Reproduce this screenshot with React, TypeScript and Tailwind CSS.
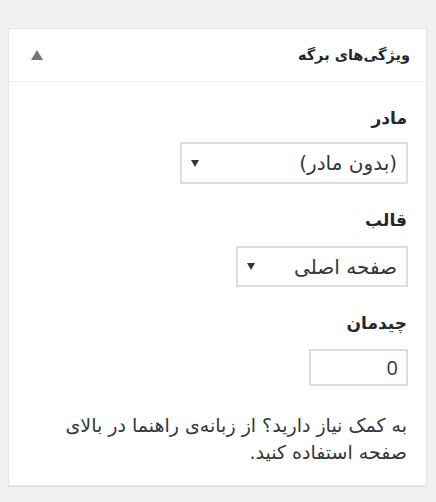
import React from "react";

const font = { fontFamily: '"DejaVu Sans", "Noto Sans", sans-serif' };

function Arrow() {
  return (
    <svg width="8" height="7" viewBox="0 0 8 7" className="shrink-0">
      <path d="M0 0 H8 L4 7 Z" fill="#32373c" />
    </svg>
  );
}

export default function App() {
  return (
    <div className="min-h-[502px] w-[436px] bg-[#f1f1f1] pt-[28px] pl-[8px]" style={font}>
      <div dir="rtl" className="w-[419px] border border-[#e5e5e5] bg-white shadow-[0_1px_1px_rgba(0,0,0,0.04)]">
        <div className="flex h-[53px] items-center justify-between border-b border-[#eeeeee] pr-[16px] pl-[22px]">
          <h2 className="text-[14.5px] font-bold leading-none text-[#23282d]">ویژگی‌های برگه</h2>
          <svg width="12" height="10" viewBox="0 0 12 10">
            <path d="M0 10 L6 0 L12 10 Z" fill="#72777c" />
          </svg>
        </div>
        <div className="pr-[18px] pl-[18px] pt-[24px] pb-[19px] text-[#32373c]">
          <div className="pr-[1px] text-[17px] font-bold leading-[24px] text-[#23282d]">مادر</div>
          <div className="mt-[12px] flex h-[42px] w-[228px] items-center justify-between border-2 border-[#dddddd] pr-[9px] pl-[9px]">
            <span className="text-[20px] leading-none">(بدون مادر)</span>
            <Arrow />
          </div>
          <div className="mt-[24px] pr-[1px] text-[17px] font-bold leading-[24px] text-[#23282d]">قالب</div>
          <div className="mt-[14px] flex h-[41px] w-[172px] items-center justify-between border-2 border-[#dddddd] pr-[9px] pl-[9px]">
            <span className="text-[20px] leading-none">صفحه اصلی</span>
            <Arrow />
          </div>
          <div className="mt-[24px] pr-[1px] text-[17px] font-bold leading-[24px] text-[#23282d]">چیدمان</div>
          <div className="mt-[14px] flex h-[37px] w-[99px] items-center border-2 border-[#dddddd] pr-[8px]">
            <span className="text-[20px] leading-none" style={{ fontFamily: '"Open Sans", sans-serif' }}>0</span>
          </div>
          <p className="mt-[26px] pr-[1px] text-[19px] leading-[27px] text-[#32373c]">
            به کمک نیاز دارید؟ از زبانه‌ی راهنما در بالای
            <br />
            صفحه استفاده کنید.
          </p>
        </div>
      </div>
    </div>
  );
}
